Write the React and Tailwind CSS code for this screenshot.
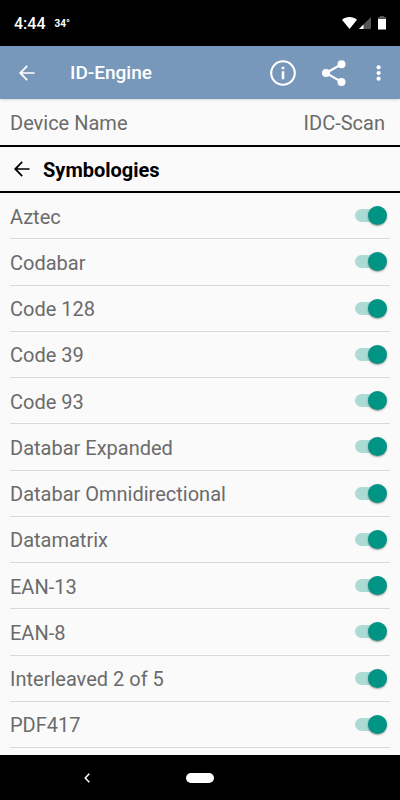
import { useState } from "react";

const SYMBOLOGIES = [
  "Aztec",
  "Codabar",
  "Code 128",
  "Code 39",
  "Code 93",
  "Databar Expanded",
  "Databar Omnidirectional",
  "Datamatrix",
  "EAN-13",
  "EAN-8",
  "Interleaved 2 of 5",
  "PDF417",
];

function ArrowBack() {
  return (
    <svg viewBox="0 0 24 24" className="size-6" fill="currentColor" aria-hidden="true">
      <path d="M19.500 11.200H7.300l5.500-5.700-1.200-1.200L4 12l7.600 7.700 1.200-1.200-5.500-5.700h12.200z" />
    </svg>
  );
}

function StatusBar() {
  return (
    <div className="flex h-[46px] items-center bg-black px-[14px] text-white">
      <span className="pt-[2px] text-base font-medium">4:44</span>
      <span className="ml-[9px] text-[10px] font-bold">34°</span>
      <div className="ml-auto flex items-center">
        <svg viewBox="0 0 15 12" className="h-3 w-[15px]" fill="currentColor" aria-hidden="true">
          <path d="M0 2.7C4-.9 11-.9 15 2.7L7.5 12z" />
        </svg>
        <svg viewBox="0 0 12 12" className="ml-[2px] size-3" aria-hidden="true">
          <path d="M12 0v12H0z" fill="#555" />
          <path d="M4.5 7.5V12H0z" fill="currentColor" />
        </svg>
        <svg viewBox="0 0 8 14" className="ml-[7px] h-[14px] w-2" aria-hidden="true">
          <path d="M2 0h4v1h2v2H0V1h2z" fill="#555" />
          <path d="M0 3h8v10.5H0z" fill="currentColor" />
        </svg>
      </div>
    </div>
  );
}

function AppBar() {
  return (
    <header className="flex h-[53px] items-center bg-[#7797bb] pr-[9px] pl-[15px] text-white shadow-sm">
      <button type="button" aria-label="Back">
        <ArrowBack />
      </button>
      <h1 className="ml-[31px] pt-[2px] text-[19px] font-medium">ID-Engine</h1>
      <div className="ml-auto flex items-center">
        <button type="button" aria-label="Info">
          <svg viewBox="0 0 26 26" className="size-[26px]" aria-hidden="true">
            <circle cx="13" cy="13" r="11.8" fill="none" stroke="currentColor" strokeWidth="2.1" />
            <path d="M11.7 6.7h2.6v2.6h-2.6zM11.7 11.3h2.6v8h-2.6z" fill="currentColor" />
          </svg>
        </button>
        <button type="button" aria-label="Share" className="ml-[26px]">
          <svg viewBox="0 0 24 26" className="h-[26px] w-6" fill="currentColor" aria-hidden="true">
            <path d="M19.5 4.3 4 13l15.5 8.9" fill="none" stroke="currentColor" strokeWidth="2.2" />
            <circle cx="19.5" cy="4.2" r="4" />
            <circle cx="4" cy="13" r="4" />
            <circle cx="19.5" cy="21.9" r="4" />
          </svg>
        </button>
        <button type="button" aria-label="More options" className="ml-[21px]">
          <svg viewBox="0 0 24 24" className="size-6" fill="currentColor" aria-hidden="true">
            <circle cx="11.6" cy="6.3" r="2.1" />
            <circle cx="11.6" cy="12" r="2.1" />
            <circle cx="11.6" cy="17.7" r="2.1" />
          </svg>
        </button>
      </div>
    </header>
  );
}

function SymbologyRow({ name }) {
  const [enabled, setEnabled] = useState(true);

  return (
    <li className="flex min-h-[46px] flex-1 border-b border-[#d9d9d9]">
      <label className="flex flex-1 cursor-pointer items-center justify-between pr-[3px]">
        <span className="pt-[2px]">{name}</span>
        <span className="relative flex h-5 w-8 items-center">
          <input
            type="checkbox"
            role="switch"
            checked={enabled}
            onChange={(e) => setEnabled(e.target.checked)}
            className="peer h-[13px] w-7 cursor-pointer appearance-none rounded-full bg-gray-300 checked:bg-[#acdad5]"
          />
          <span className="pointer-events-none absolute left-0 size-[19px] rounded-full bg-white shadow-[0_1px_2px_rgba(0,0,0,0.4)] peer-checked:right-0 peer-checked:left-auto peer-checked:bg-[#009485]" />
        </span>
      </label>
    </li>
  );
}

function NavBar() {
  return (
    <nav className="grid h-[45px] grid-cols-[1fr_auto_1fr] items-center bg-black text-white">
      <button type="button" aria-label="Back" className="mr-[96px] justify-self-end">
        <svg viewBox="0 0 6 10" className="h-[10px] w-[6px]" fill="none" aria-hidden="true">
          <path d="M5.3.8 1.2 5l4.1 4.2" stroke="currentColor" strokeWidth="1.5" />
        </svg>
      </button>
      <button type="button" aria-label="Home" className="h-[10px] w-7 rounded-full bg-white" />
    </nav>
  );
}

export default function App() {
  return (
    <div className="flex min-h-screen flex-col bg-[#fafafa] font-['Roboto',sans-serif] text-[#6b6b6b]">
      <StatusBar />
      <AppBar />
      <main className="flex flex-1 flex-col text-xl">
        <div className="flex h-12 items-center justify-between border-b-2 border-black pt-[2px] pr-[15px] pl-[10px]">
          <span>Device Name</span>
          <span>IDC-Scan</span>
        </div>
        <div className="flex h-[46px] items-center border-b-2 border-black pl-[10px] text-black">
          <button type="button" aria-label="Back to settings">
            <ArrowBack />
          </button>
          <h2 className="ml-[9px] pt-[2px] text-xl font-bold">Symbologies</h2>
        </div>
        <ul className="flex flex-1 flex-col px-[10px] pb-[7px]">
          {SYMBOLOGIES.map((name) => (
            <SymbologyRow key={name} name={name} />
          ))}
        </ul>
      </main>
      <NavBar />
    </div>
  );
}
